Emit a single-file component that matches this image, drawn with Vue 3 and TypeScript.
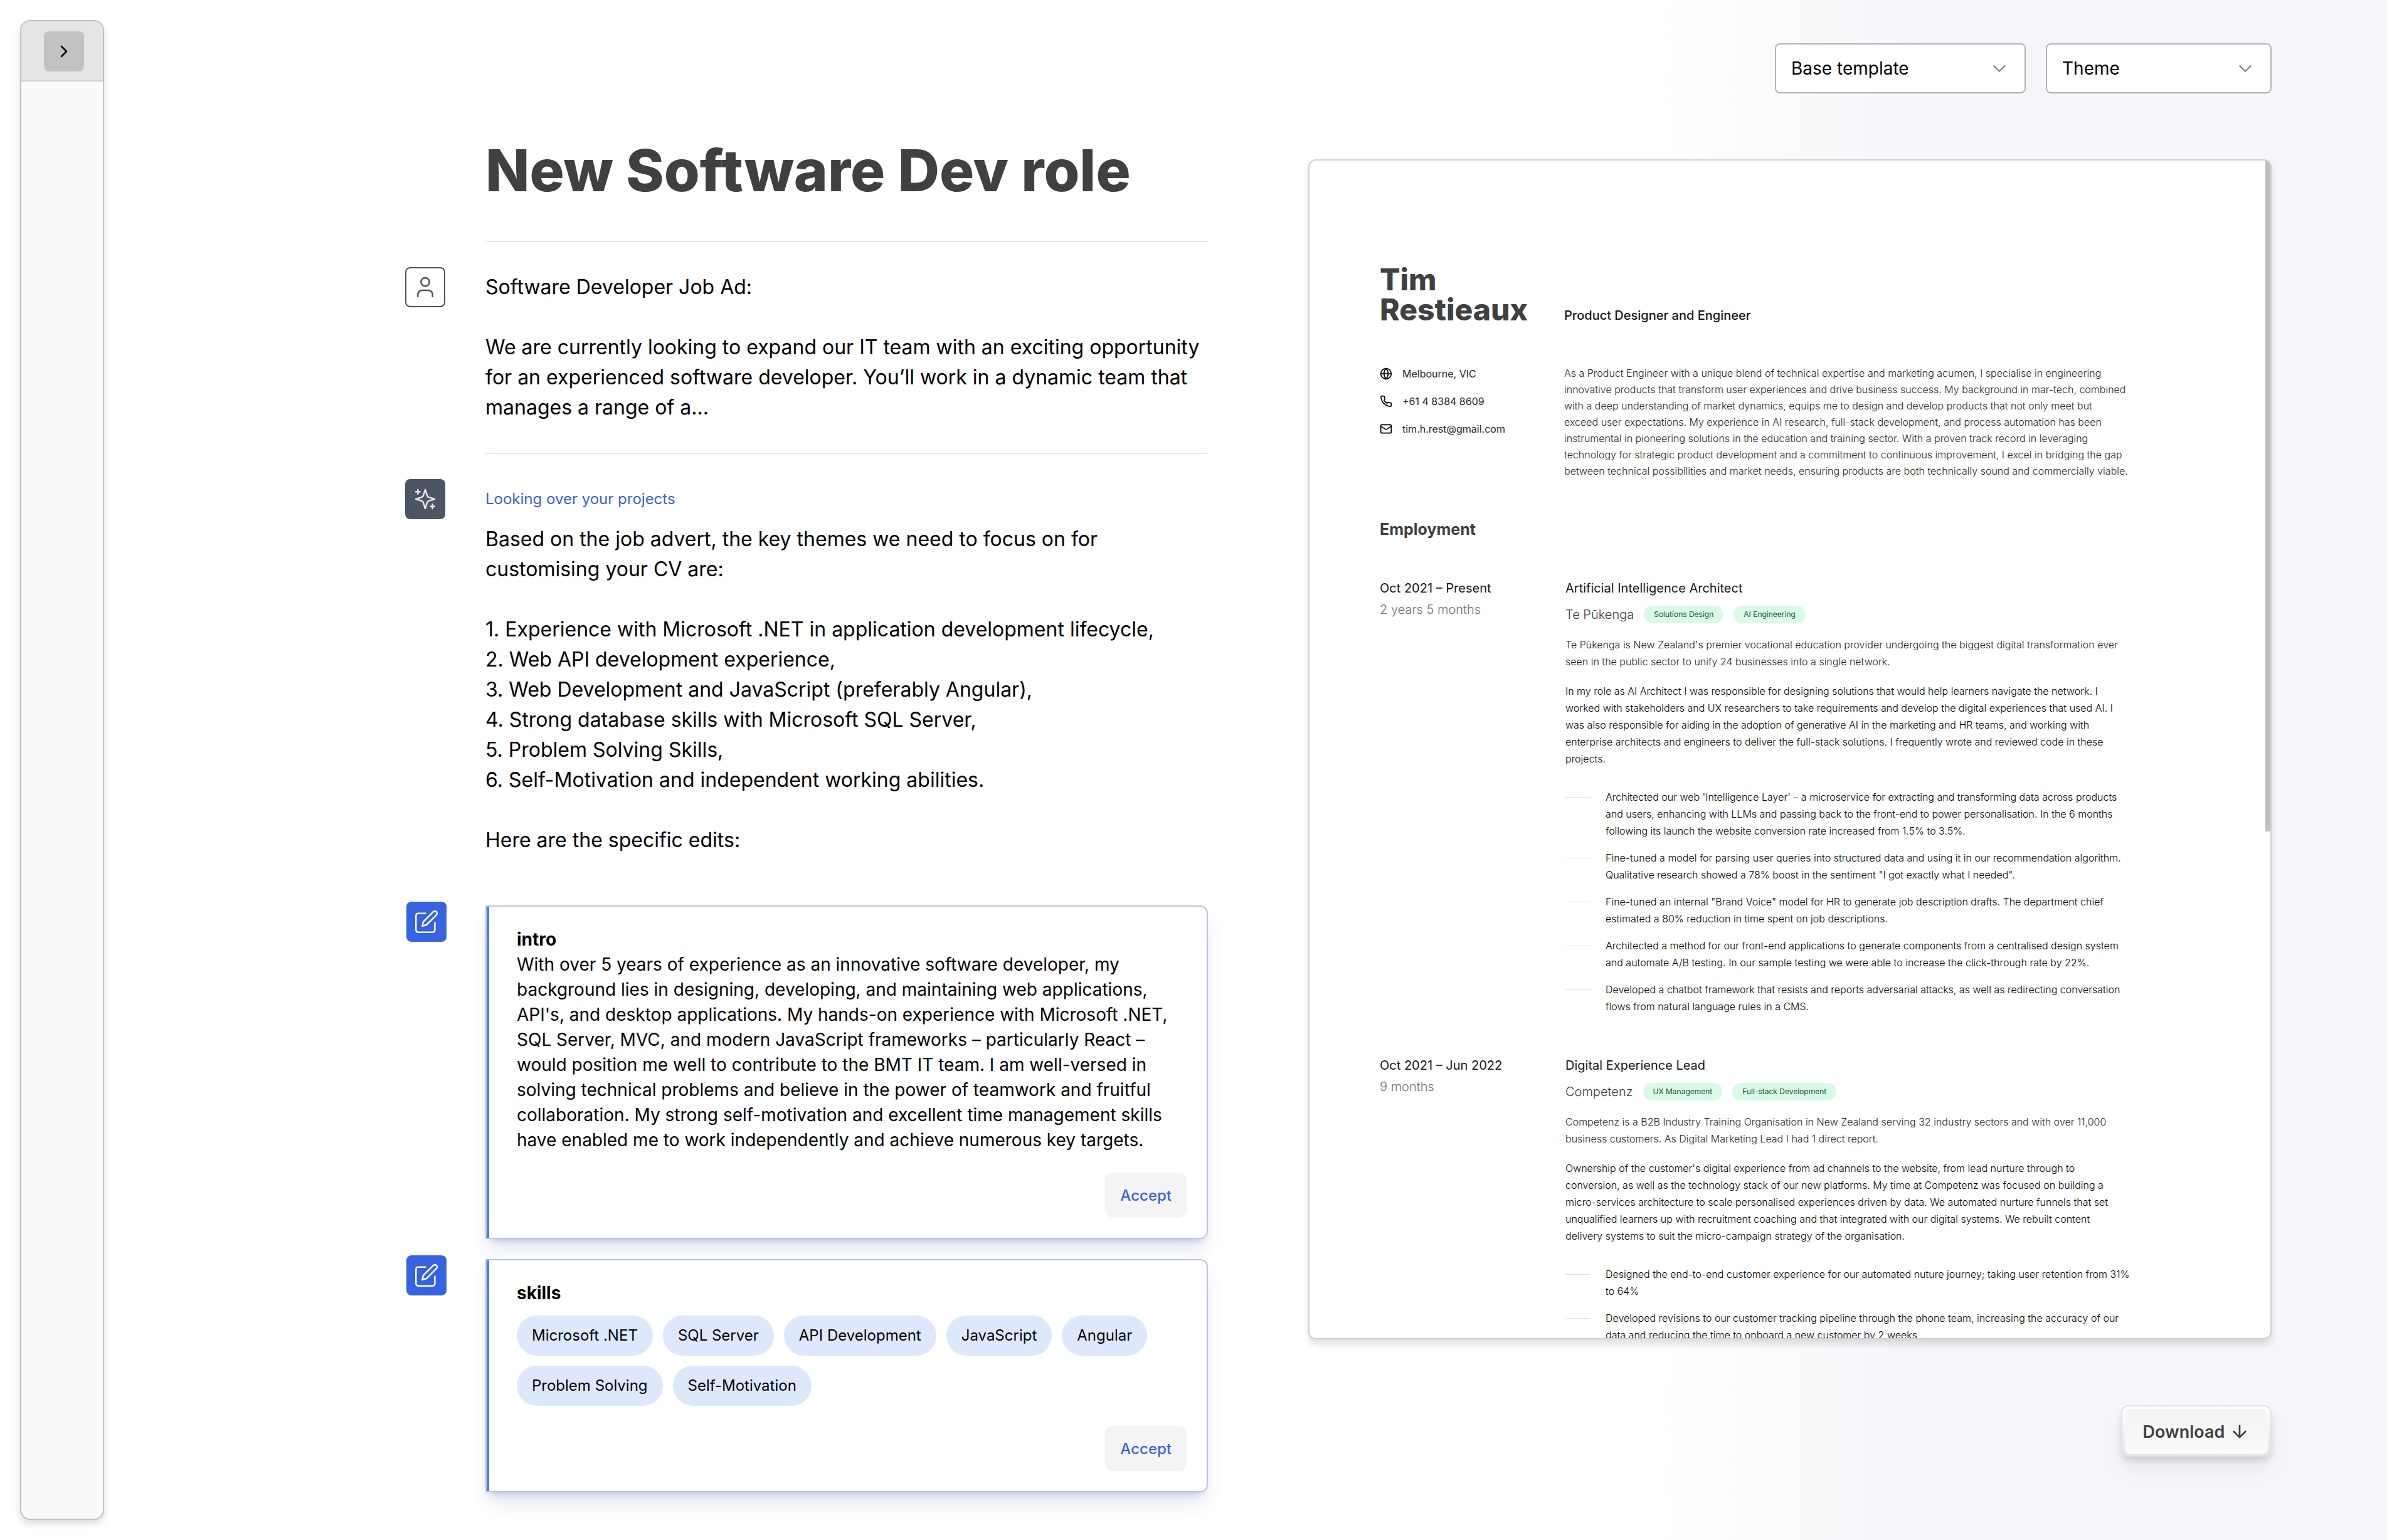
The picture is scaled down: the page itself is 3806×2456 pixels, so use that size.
<script setup lang="ts">
interface Job {
  period: string
  length: string
  title: string
  company: string
  tags: string[]
  about: string
  summary: string
  points: string[]
}

const themes: string[] = [
  'Experience with Microsoft .NET in application development lifecycle,',
  'Web API development experience,',
  'Web Development and JavaScript (preferably Angular),',
  'Strong database skills with Microsoft SQL Server,',
  'Problem Solving Skills,',
  'Self-Motivation and independent working abilities.',
]

const skills: string[] = [
  'Microsoft .NET',
  'SQL Server',
  'API Development',
  'JavaScript',
  'Angular',
  'Problem Solving',
  'Self-Motivation',
]

const jobs: Job[] = [
  {
    period: 'Oct 2021 – Present',
    length: '2 years 5 months',
    title: 'Artificial Intelligence Architect',
    company: 'Te Pūkenga',
    tags: ['Solutions Design', 'AI Engineering'],
    about:
      "Te Pūkenga is New Zealand's premier vocational education provider undergoing the biggest digital transformation ever seen in the public sector to unify 24 businesses into a single network.",
    summary:
      'In my role as AI Architect I was responsible for designing solutions that would help learners navigate the network. I worked with stakeholders and UX researchers to take requirements and develop the digital experiences that used AI. I was also responsible for aiding in the adoption of generative AI in the marketing and HR teams, and working with enterprise architects and engineers to deliver the full-stack solutions. I frequently wrote and reviewed code in these projects.',
    points: [
      "Architected our web 'Intelligence Layer' – a microservice for extracting and transforming data across products and users, enhancing with LLMs and passing back to the front-end to power personalisation. In the 6 months following its launch the website conversion rate increased from 1.5% to 3.5%.",
      'Fine-tuned a model for parsing user queries into structured data and using it in our recommendation algorithm. Qualitative research showed a 78% boost in the sentiment "I got exactly what I needed".',
      'Fine-tuned an internal "Brand Voice" model for HR to generate job description drafts. The department chief estimated a 80% reduction in time spent on job descriptions.',
      'Architected a method for our front-end applications to generate components from a centralised design system and automate A/B testing. In our sample testing we were able to increase the click-through rate by 22%.',
      'Developed a chatbot framework that resists and reports adversarial attacks, as well as redirecting conversation flows from natural language rules in a CMS.',
    ],
  },
  {
    period: 'Oct 2021 – Jun 2022',
    length: '9 months',
    title: 'Digital Experience Lead',
    company: 'Competenz',
    tags: ['UX Management', 'Full-stack Development'],
    about:
      'Competenz is a B2B Industry Training Organisation in New Zealand serving 32 industry sectors and with over 11,000 business customers. As Digital Marketing Lead I had 1 direct report.',
    summary:
      "Ownership of the customer's digital experience from ad channels to the website, from lead nurture through to conversion, as well as the technology stack of our new platforms. My time at Competenz was focused on building a micro-services architecture to scale personalised experiences driven by data. We automated nurture funnels that set unqualified learners up with recruitment coaching and that integrated with our digital systems. We rebuilt content delivery systems to suit the micro-campaign strategy of the organisation.",
    points: [
      'Designed the end-to-end customer experience for our automated nuture journey; taking user retention from 31% to 64%',
      'Developed revisions to our customer tracking pipeline through the phone team, increasing the accuracy of our data and reducing the time to onboard a new customer by 2 weeks',
    ],
  },
]
</script>

<template>
  <div class="page">
    <aside class="sidebar">
      <header class="sidebar-head">
        <button class="toggle" type="button" aria-label="Expand sidebar">
          <svg class="icon icon-sm" viewBox="0 0 24 24" stroke-width="2"><path d="m9 18 6-6-6-6" /></svg>
        </button>
      </header>
    </aside>

    <main class="workspace">
      <section class="chat">
        <h1 class="title">New Software Dev role</h1>

        <article class="message">
          <span class="badge badge-user">
            <svg class="icon icon-md" viewBox="0 0 24 24" stroke-width="1.5">
              <path d="M19 21v-2a4 4 0 0 0-4-4H9a4 4 0 0 0-4 4v2" />
              <circle cx="12" cy="7" r="4" />
            </svg>
          </span>
          <div class="message-body">
            <p>Software Developer Job Ad:</p>
            <p class="spaced">
              We are currently looking to expand our IT team with an exciting opportunity for an experienced software
              developer. You’ll work in a dynamic team that manages a range of a...
            </p>
          </div>
        </article>

        <article class="message">
          <span class="badge badge-ai">
            <svg class="icon icon-md" viewBox="0 0 24 24" stroke-width="1.5">
              <path
                d="m12 3-1.912 5.813a2 2 0 0 1-1.275 1.275L3 12l5.813 1.912a2 2 0 0 1 1.275 1.275L12 21l1.912-5.813a2 2 0 0 1 1.275-1.275L21 12l-5.813-1.912a2 2 0 0 1-1.275-1.275L12 3Z"
              />
              <path d="M5 3v4M19 17v4M3 5h4M17 19h4" />
            </svg>
          </span>
          <div class="message-body">
            <p class="status">Looking over your projects</p>
            <p>Based on the job advert, the key themes we need to focus on for customising your CV are:</p>
            <ol class="themes spaced">
              <li v-for="(theme, i) in themes" :key="theme">{{ i + 1 }}. {{ theme }}</li>
            </ol>
            <p class="spaced">Here are the specific edits:</p>
          </div>
        </article>

        <div class="edits">
          <div class="edit">
            <span class="badge badge-edit">
              <svg class="icon icon-md" viewBox="0 0 24 24" stroke-width="1.5">
                <path d="M11 4H4a2 2 0 0 0-2 2v14a2 2 0 0 0 2 2h14a2 2 0 0 0 2-2v-7" />
                <path d="M18.5 2.5a2.12 2.12 0 0 1 3 3L12 15l-4 1 1-4Z" />
              </svg>
            </span>
            <section class="card">
              <div class="card-text">
                <h2>intro</h2>
                <p>
                  With over 5 years of experience as an innovative software developer, my background lies in designing,
                  developing, and maintaining web applications, API's, and desktop applications. My hands-on experience
                  with Microsoft .NET, SQL Server, MVC, and modern JavaScript frameworks – particularly React – would
                  position me well to contribute to the BMT IT team. I am well-versed in solving technical problems and
                  believe in the power of teamwork and fruitful collaboration. My strong self-motivation and excellent
                  time management skills have enabled me to work independently and achieve numerous key targets.
                </p>
              </div>
              <button class="accept" type="button">Accept</button>
            </section>
          </div>

          <div class="edit">
            <span class="badge badge-edit">
              <svg class="icon icon-md" viewBox="0 0 24 24" stroke-width="1.5">
                <path d="M11 4H4a2 2 0 0 0-2 2v14a2 2 0 0 0 2 2h14a2 2 0 0 0 2-2v-7" />
                <path d="M18.5 2.5a2.12 2.12 0 0 1 3 3L12 15l-4 1 1-4Z" />
              </svg>
            </span>
            <section class="card">
              <div class="card-text">
                <h2>skills</h2>
                <ul class="skills">
                  <li v-for="skill in skills" :key="skill">{{ skill }}</li>
                </ul>
              </div>
              <button class="accept" type="button">Accept</button>
            </section>
          </div>
        </div>
      </section>

      <section class="preview">
        <div class="controls">
          <div class="picker picker-template">
            <select aria-label="Base template">
              <option>Base template</option>
            </select>
            <svg class="icon icon-sm" viewBox="0 0 24 24" stroke-width="1.5"><path d="m5.5 9 6.5 6.5L18.5 9" /></svg>
          </div>
          <div class="picker picker-theme">
            <select aria-label="Theme">
              <option>Theme</option>
            </select>
            <svg class="icon icon-sm" viewBox="0 0 24 24" stroke-width="1.5"><path d="m5.5 9 6.5 6.5L18.5 9" /></svg>
          </div>
        </div>

        <div class="paper">
          <div class="cv">
            <header class="cv-row cv-head">
              <h2 class="cv-name">Tim<br />Restieaux</h2>
              <p class="cv-role">Product Designer and Engineer</p>
            </header>

            <div class="cv-row cv-intro">
              <ul class="contacts">
                <li>
                  <svg class="icon icon-xs" viewBox="0 0 24 24" stroke-width="2">
                    <circle cx="12" cy="12" r="10" />
                    <path d="M12 2a14.5 14.5 0 0 0 0 20 14.5 14.5 0 0 0 0-20M2 12h20" />
                  </svg>
                  Melbourne, VIC
                </li>
                <li>
                  <svg class="icon icon-xs" viewBox="0 0 24 24" stroke-width="2">
                    <path
                      d="M22 16.92v3a2 2 0 0 1-2.18 2 19.79 19.79 0 0 1-8.63-3.07 19.5 19.5 0 0 1-6-6 19.79 19.79 0 0 1-3.07-8.67A2 2 0 0 1 4.11 2h3a2 2 0 0 1 2 1.72 12.84 12.84 0 0 0 .7 2.81 2 2 0 0 1-.45 2.11L8.09 9.91a16 16 0 0 0 6 6l1.27-1.27a2 2 0 0 1 2.11-.45 12.84 12.84 0 0 0 2.81.7A2 2 0 0 1 22 16.92z"
                    />
                  </svg>
                  +61 4 8384 8609
                </li>
                <li>
                  <svg class="icon icon-xs" viewBox="0 0 24 24" stroke-width="2">
                    <rect x="2" y="4" width="20" height="16" rx="2" />
                    <path d="m22 7-8.97 5.7a1.94 1.94 0 0 1-2.06 0L2 7" />
                  </svg>
                  tim.h.rest@gmail.com
                </li>
              </ul>
              <p class="cv-summary">
                As a Product Engineer with a unique blend of technical expertise and marketing acumen, I specialise in
                engineering innovative products that transform user experiences and drive business success. My
                background in mar-tech, combined with a deep understanding of market dynamics, equips me to design and
                develop products that not only meet but exceed user expectations. My experience in AI research,
                full-stack development, and process automation has been instrumental in pioneering solutions in the
                education and training sector. With a proven track record in leveraging technology for strategic product
                development and a commitment to continuous improvement, I excel in bridging the gap between technical
                possibilities and market needs, ensuring products are both technically sound and commercially viable.
              </p>
            </div>

            <h3 class="cv-heading">Employment</h3>

            <div class="jobs">
              <article v-for="job in jobs" :key="job.title" class="cv-row">
                <div class="job-when">
                  <p class="job-strong">{{ job.period }}</p>
                  <p class="job-length">{{ job.length }}</p>
                </div>
                <div class="job-what">
                  <h4 class="job-strong">{{ job.title }}</h4>
                  <div class="job-company">
                    <span>{{ job.company }}</span>
                    <span v-for="tag in job.tags" :key="tag" class="tag">{{ tag }}</span>
                  </div>
                  <p class="job-about">{{ job.about }}</p>
                  <p class="job-summary">{{ job.summary }}</p>
                  <ul class="points">
                    <li v-for="point in job.points" :key="point">{{ point }}</li>
                  </ul>
                </div>
              </article>
            </div>
          </div>
          <span class="scroll-thumb"></span>
        </div>

        <button class="download" type="button">
          <span class="download-face">
            Download
            <svg class="icon icon-sm" viewBox="0 0 24 24" stroke-width="2"><path d="M12 5v14M19 12l-7 7-7-7" /></svg>
          </span>
        </button>
      </section>
    </main>
  </div>
</template>

<style>
body {
  margin: 0;
}
</style>

<style scoped>
.page,
.page * {
  box-sizing: border-box;
  margin: 0;
  padding: 0;
}

.page {
  display: flex;
  min-height: 100vh;
  font-family: Inter, 'Liberation Sans', sans-serif;
  font-size: 32px;
  line-height: 48px;
  color: #000;
  background: linear-gradient(90deg, #fff 69%, #f5f6fa 81%);
}

.page ul,
.page ol {
  list-style: none;
}

.page button,
.page select {
  font-family: inherit;
  cursor: pointer;
}

.icon {
  flex: none;
  fill: none;
  stroke: currentColor;
  stroke-linecap: round;
  stroke-linejoin: round;
}

.icon-xs {
  width: 20px;
  height: 20px;
}

.icon-sm {
  width: 32px;
  height: 32px;
}

.icon-md {
  width: 40px;
  height: 40px;
}

/* Sidebar */
.page .sidebar {
  flex: none;
  width: 134px;
  margin: 32px 0 32px 32px;
  overflow: hidden;
  border: 2px solid #c2c2c2;
  border-radius: 16px;
  background: #fafafa;
  box-shadow: 0 6px 12px rgba(0, 0, 0, 0.14);
}

.page .sidebar-head {
  display: flex;
  justify-content: flex-end;
  height: 96px;
  padding: 16px 30px 0;
  border-bottom: 2px solid #cfcfcf;
  background: #e5e5e5;
}

.toggle {
  display: grid;
  place-items: center;
  width: 64px;
  height: 64px;
  border: 0;
  border-radius: 8px;
  color: #000;
  background: #c2c2c2;
}

/* Workspace */
.page .workspace {
  display: grid;
  flex: 1;
  grid-template-columns: 1280fr 1536fr;
  gap: 160px;
  padding: 0 184px 0 480px;
}

/* Conversation */
.page .chat {
  padding: 224px 0 76px;
}

.page .title {
  margin: 0 0 64px 128px;
  font-size: 92px;
  font-weight: 800;
  line-height: 96px;
  color: #404040;
}

.message {
  display: flex;
  gap: 64px;
}

.page .message-body {
  flex: 1;
  padding: 48px 0;
  border-top: 2px solid #e2e8f0;
}

.page .spaced {
  margin-top: 48px;
}

.badge {
  display: grid;
  flex: none;
  place-items: center;
  width: 64px;
  height: 64px;
  border-radius: 8px;
}

.page .message .badge {
  margin-top: 42px;
}

.badge-user {
  border: 2px solid #4b5563;
  color: #4b5563;
  background: #fff;
}

.badge-ai {
  color: #e5e7eb;
  background: #4b5563;
}

.page .badge-edit {
  margin: -6px 0 0 2px;
  color: #fff;
  background: #3763e2;
}

.page .status {
  margin-bottom: 16px;
  font-size: 24px;
  color: #3763e2;
}

.page .edits {
  display: grid;
  gap: 32px;
  margin-top: 32px;
}

.edit {
  display: flex;
  gap: 62px;
}

.page .card {
  display: flex;
  flex: 1;
  flex-direction: column;
  align-items: flex-end;
  gap: 32px;
  padding: 32px;
  border: 2px solid #bac4e6;
  border-radius: 0 12px 12px 0;
  background: #fff;
  box-shadow:
    inset 4px 0 #4a7de8,
    0 20px 30px -6px rgba(48, 66, 140, 0.16),
    0 8px 12px -8px rgba(48, 66, 140, 0.3);
}

.page .card-text {
  width: 100%;
  padding: 0 16px;
  font-size: 28px;
  line-height: 40px;
}

.card-text h2 {
  font-size: 28px;
  font-weight: 700;
}

.page .accept {
  height: 72px;
  padding: 0 24px;
  border: 0;
  border-radius: 12px;
  font-size: 24px;
  font-weight: 500;
  color: #3763e2;
  background: #f4f4f4;
}

.page .skills {
  display: flex;
  flex-wrap: wrap;
  gap: 16px;
  margin-top: 16px;
}

.page .skills li {
  padding: 0 24px;
  border-radius: 32px;
  font-size: 24px;
  line-height: 64px;
  background: #dde8fb;
}

/* Preview */
.page .preview {
  display: flex;
  flex-direction: column;
  align-items: flex-end;
  gap: 105px;
  height: 100vh;
  padding: 69px 0 133px;
}

.controls {
  display: flex;
  gap: 32px;
}

.picker {
  display: grid;
  align-items: center;
}

.picker-template {
  width: 400px;
}

.picker-theme {
  width: 360px;
}

.page .picker select {
  grid-area: 1 / 1;
  width: 100%;
  height: 80px;
  padding: 0 64px 0 24px;
  border: 2px solid #b3b3b3;
  border-radius: 8px;
  appearance: none;
  font-size: 28px;
  color: #000;
  background: #fff;
}

.page .picker svg {
  grid-area: 1 / 1;
  justify-self: end;
  margin-right: 26px;
  color: #737373;
  pointer-events: none;
}

.paper {
  position: relative;
  flex: 1;
  width: 100%;
  min-height: 0;
  overflow: hidden;
  border: 2px solid #d1d1d1;
  border-radius: 12px;
  background: #fff;
  box-shadow: 0 8px 12px rgba(0, 0, 0, 0.12);
}

.scroll-thumb {
  position: absolute;
  top: 0;
  right: 0;
  width: 8px;
  height: 57%;
  background: #bfbfbf;
}

.page .cv {
  padding: 166px 218px 0 112px;
  font-size: 16px;
  line-height: 27px;
  color: #262626;
}

.cv-row {
  display: grid;
  grid-template-columns: 296px 1fr;
}

.page .cv-head,
.page .cv-intro {
  grid-template-columns: 294px 1fr;
}

.cv-head {
  align-items: end;
}

.cv-name {
  font-size: 48px;
  font-weight: 800;
  line-height: 48px;
  color: #404040;
}

.cv-role {
  font-size: 20px;
  font-weight: 500;
  line-height: 30px;
  color: #171717;
}

.page .cv-intro {
  margin: 64px 0;
}

.contacts {
  display: grid;
  align-content: start;
  gap: 16px;
}

.contacts li {
  display: flex;
  align-items: center;
  gap: 16px;
  line-height: 28px;
}

.contacts svg {
  color: #000;
}

.cv-summary {
  max-width: 900px;
  font-weight: 300;
  line-height: 26px;
}

.cv-heading {
  font-size: 25px;
  font-weight: 700;
  line-height: 32px;
  color: #404040;
}

.page .jobs {
  display: grid;
  gap: 66px;
  margin-top: 64px;
}

.job-strong {
  font-size: 20px;
  font-weight: 400;
  line-height: 28px;
  color: #171717;
}

.page .job-length {
  margin-top: 6px;
  font-size: 20px;
  font-weight: 300;
  line-height: 28px;
  color: #737373;
}

.page .job-company {
  display: flex;
  align-items: center;
  gap: 16px;
  margin: 14px 0 21px;
  font-size: 20px;
  font-weight: 300;
  line-height: 28px;
  color: #404040;
}

.page .tag {
  padding: 0 16px;
  border-radius: 14px;
  font-size: 12px;
  font-weight: 400;
  color: #14532d;
  background: #d9fae6;
}

.job-about,
.job-summary {
  max-width: 892px;
  font-weight: 300;
}

.page .job-summary {
  margin-top: 20px;
  color: #000;
}

.page .points {
  display: grid;
  gap: 16px;
  margin-top: 34px;
  font-weight: 300;
  color: #000;
}

.points li {
  display: flex;
  gap: 24px;
}

.page .points li::before {
  content: '';
  flex: none;
  width: 40px;
  height: 1px;
  margin-top: 13px;
  background: #e0e0e0;
}

.page .download {
  flex: none;
  width: 240px;
  height: 82px;
  padding: 4px;
  border: 2px solid #e0e2e5;
  border-bottom: 0;
  border-radius: 12px;
  background: linear-gradient(#fff, #e4e4e4);
  box-shadow:
    0 8px 12px -2px rgba(0, 0, 0, 0.14),
    0 20px 30px rgba(0, 0, 0, 0.05);
}

.download-face {
  display: flex;
  align-items: center;
  justify-content: center;
  gap: 8px;
  height: 100%;
  border-radius: 8px;
  font-size: 27px;
  font-weight: 600;
  color: #404040;
  background: linear-gradient(#f4f4f4, #fafafa);
}
</style>
